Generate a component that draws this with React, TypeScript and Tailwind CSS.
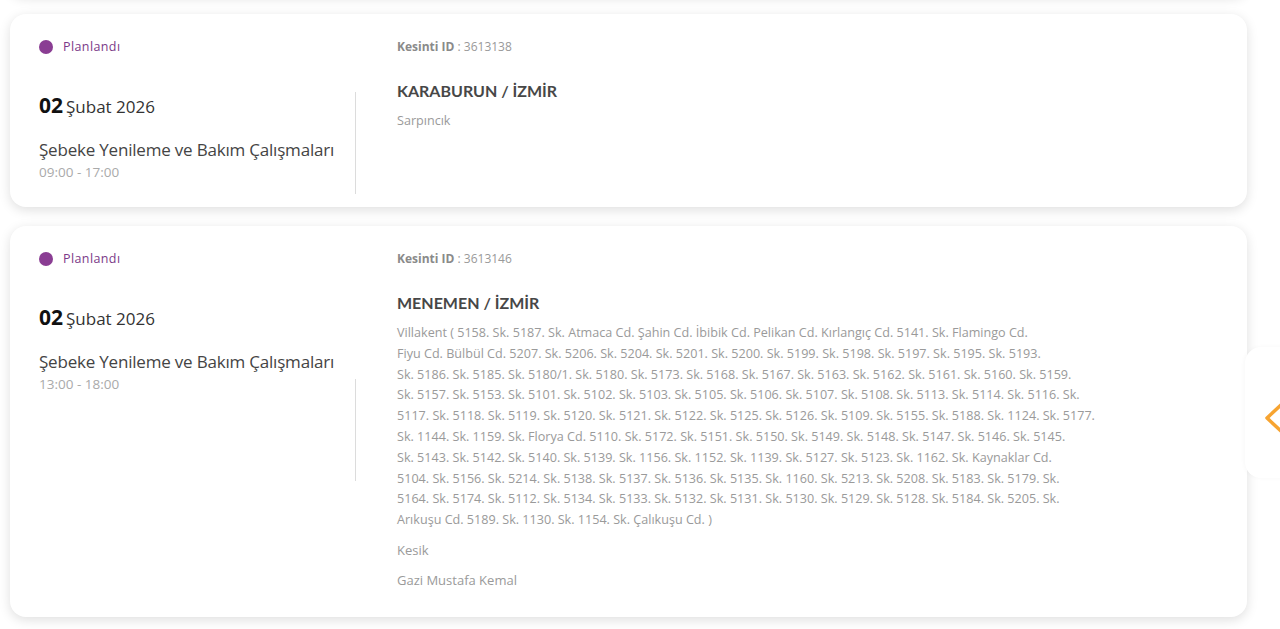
type Outage = {
  id: string;
  date: string;
  month: string;
  title: string;
  time: string;
  place: string;
  detail: string[];
  extra?: string[];
  dividerTop: string;
};

const OUTAGES: Outage[] = [
  {
    id: "3613138",
    date: "02",
    month: "Şubat 2026",
    title: "Şebeke Yenileme ve Bakım Çalışmaları",
    time: "09:00 - 17:00",
    place: "KARABURUN / İZMİR",
    detail: ["Sarpıncık"],
    dividerTop: "top-[78px]",
  },
  {
    id: "3613146",
    date: "02",
    month: "Şubat 2026",
    title: "Şebeke Yenileme ve Bakım Çalışmaları",
    time: "13:00 - 18:00",
    place: "MENEMEN / İZMİR",
    // street list, broken where the site breaks it
    detail: [
      "Villakent ( 5158. Sk. 5187. Sk. Atmaca Cd. Şahin Cd. İbibik Cd. Pelikan Cd. Kırlangıç Cd. 5141. Sk. Flamingo Cd.",
      "Fiyu Cd. Bülbül Cd. 5207. Sk. 5206. Sk. 5204. Sk. 5201. Sk. 5200. Sk. 5199. Sk. 5198. Sk. 5197. Sk. 5195. Sk. 5193.",
      "Sk. 5186. Sk. 5185. Sk. 5180/1. Sk. 5180. Sk. 5173. Sk. 5168. Sk. 5167. Sk. 5163. Sk. 5162. Sk. 5161. Sk. 5160. Sk. 5159.",
      "Sk. 5157. Sk. 5153. Sk. 5101. Sk. 5102. Sk. 5103. Sk. 5105. Sk. 5106. Sk. 5107. Sk. 5108. Sk. 5113. Sk. 5114. Sk. 5116. Sk.",
      "5117. Sk. 5118. Sk. 5119. Sk. 5120. Sk. 5121. Sk. 5122. Sk. 5125. Sk. 5126. Sk. 5109. Sk. 5155. Sk. 5188. Sk. 1124. Sk. 5177.",
      "Sk. 1144. Sk. 1159. Sk. Florya Cd. 5110. Sk. 5172. Sk. 5151. Sk. 5150. Sk. 5149. Sk. 5148. Sk. 5147. Sk. 5146. Sk. 5145.",
      "Sk. 5143. Sk. 5142. Sk. 5140. Sk. 5139. Sk. 1156. Sk. 1152. Sk. 1139. Sk. 5127. Sk. 5123. Sk. 1162. Sk. Kaynaklar Cd.",
      "5104. Sk. 5156. Sk. 5214. Sk. 5138. Sk. 5137. Sk. 5136. Sk. 5135. Sk. 1160. Sk. 5213. Sk. 5208. Sk. 5183. Sk. 5179. Sk.",
      "5164. Sk. 5174. Sk. 5112. Sk. 5134. Sk. 5133. Sk. 5132. Sk. 5131. Sk. 5130. Sk. 5129. Sk. 5128. Sk. 5184. Sk. 5205. Sk.",
      "Arıkuşu Cd. 5189. Sk. 1130. Sk. 1154. Sk. Çalıkuşu Cd. )",
    ],
    extra: ["Kesik", "Gazi Mustafa Kemal"],
    dividerTop: "top-[153px]",
  },
];

function OutageCard({ o }: { o: Outage }) {
  return (
    <div className="relative flex bg-white rounded-2xl shadow-[0_3px_12px_rgba(0,0,0,0.13)] pt-[26px] pb-[26px]">
      {/* Left: status, date, title */}
      <div className="relative w-[346px] shrink-0 pl-[29px] font-['Open_Sans',sans-serif]">
        <div className="flex items-center gap-[10px] h-[14px]">
          <span className="w-[14px] h-[14px] rounded-full bg-[#8a3d93]" />
          <span className="text-[12.5px] tracking-[0.4px] text-[#7b3a88]">
            Planlandı
          </span>
        </div>
        <div className="mt-[41px] flex items-baseline gap-[3px] leading-none">
          <span className="text-[21px] font-bold text-[#111]">{o.date}</span>
          <span className="text-[17px] text-[#333]">{o.month}</span>
        </div>
        <div className="mt-[23px] text-[17px] leading-[22px] text-[#444] tracking-[-0.2px]">
          {o.title}
        </div>
        <div className="mt-[2px] text-[13.5px] text-[#aaa] leading-[18px]">
          {o.time}
        </div>
      </div>

      <div
        className={`absolute left-[345px] w-px h-[102px] bg-[#dcdcdc] ${o.dividerTop}`}
      />

      {/* Right: location and streets */}
      <div className="ml-[41px] w-[720px] font-['Open_Sans',sans-serif]">
        <div className="h-[14px] flex items-center text-[12px] text-[#999]">
          <span className="font-bold text-[#8a8a8a]">Kesinti ID</span>
          <span>&nbsp;: {o.id}</span>
        </div>
        <div className="mt-[27px] text-[16px] font-bold text-[#474747] leading-[20px] font-['Lato',sans-serif]">
          {o.place}
        </div>
        <p className="mt-[10px] text-[12.6px] leading-[20.8px] text-[#9a9a9a] whitespace-nowrap">
          {o.detail.map((line, i) => (
            <span key={i}>
              {i > 0 && <br />}
              {line}
            </span>
          ))}
        </p>
        {o.extra?.map((e) => (
          <div
            key={e}
            className="mt-[9px] text-[13px] leading-[20.8px] text-[#9a9a9a]"
          >
            {e}
          </div>
        ))}
      </div>
    </div>
  );
}

export default function App() {
  return (
    <div className="relative min-h-[629px] bg-white overflow-hidden">
      <div className="-mt-[19px] flex flex-col gap-[19px] pl-[10px] pr-[33px] pb-[20px]">
        {/* tail of the previous card */}
        <div className="h-[14px] bg-white rounded-b-2xl shadow-[0_3px_12px_rgba(0,0,0,0.13)]" />
        {OUTAGES.map((o) => (
          <OutageCard key={o.id} o={o} />
        ))}
      </div>

      {/* side tab */}
      <div className="absolute left-[1245px] top-[347px] w-[60px] h-[131px] bg-white rounded-l-2xl shadow-[-1px_0_4px_rgba(0,0,0,0.03)]">
        <svg
          className="absolute left-[19px] top-[54px]"
          width="24"
          height="34"
          viewBox="0 0 24 34"
          fill="none"
          stroke="#f7a431"
          strokeWidth={3.5}
          strokeLinecap="round"
          strokeLinejoin="round"
        >
          <polyline points="19,2 3,17 19,32" />
        </svg>
      </div>
    </div>
  );
}
